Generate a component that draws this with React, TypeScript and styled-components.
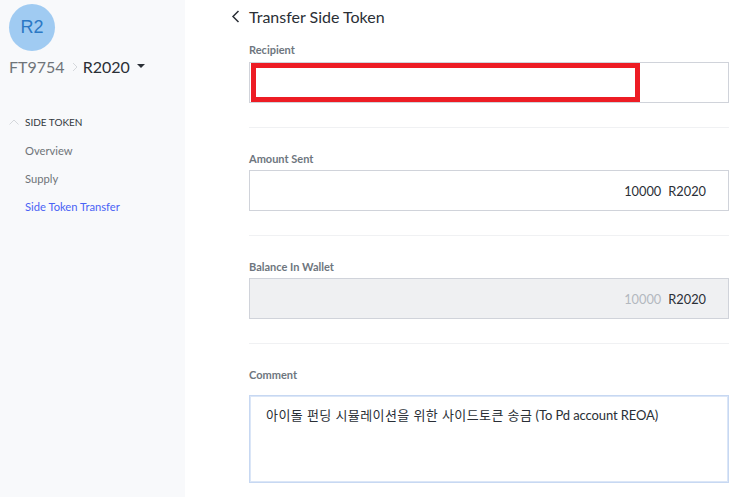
import styled, { createGlobalStyle } from "styled-components";

const GlobalStyle = createGlobalStyle`
  html, body {
    margin: 0;
    padding: 0;
    background: #fff;
    overflow: hidden;
  }
  body {
    font-family: Lato, "Noto Sans CJK KR", sans-serif;
  }
`;

const Page = styled.div`
  display: flex;
  width: 746px;
  height: 497px;
  overflow: hidden;
`;

const Sidebar = styled.aside`
  width: 185px;
  flex-shrink: 0;
  background: #f8f9fb;
  padding: 4px 0 0 9px;
  box-sizing: border-box;
`;

const Avatar = styled.div`
  width: 46px;
  height: 47px;
  border-radius: 50%;
  background: #a0cbf2;
  color: #2b78c5;
  font-family: "Liberation Sans", sans-serif;
  font-size: 18px;
  display: flex;
  align-items: center;
  justify-content: center;
`;

const Crumbs = styled.div`
  display: flex;
  align-items: center;
  margin-top: 3px;
  height: 24px;
  font-size: 16px;
  color: #6f7479;
`;

const CrumbSep = styled.svg`
  width: 6px;
  height: 10px;
  margin: 1px 5px 0 7px;
`;

const CrumbCurrent = styled.span`
  color: #2a2f36;
`;

const Caret = styled.span`
  width: 0;
  height: 0;
  margin: 0 0 0 7px;
  border-left: 4px solid transparent;
  border-right: 4px solid transparent;
  border-top: 4px solid #2a2f36;
`;

const NavHead = styled.div`
  display: flex;
  align-items: center;
  margin-top: 34px;
  height: 20px;
  font-size: 10px;
  color: #33383e;
`;

const NavChevron = styled.svg`
  width: 10px;
  height: 6px;
  margin-right: 6px;
`;

const NavList = styled.nav`
  display: flex;
  flex-direction: column;
  margin-top: 5px;
  padding-left: 16px;
`;

const NavItem = styled.a<{ $active?: boolean }>`
  height: 28px;
  line-height: 28px;
  font-size: 11.2px;
  color: ${(p) => (p.$active ? "#4a63f5" : "#6f7479")};
`;

const Main = styled.main`
  flex: 1;
  padding: 0 17px 0 64px;
`;

const TitleRow = styled.div`
  display: flex;
  align-items: center;
  height: 33px;
  margin-bottom: 8px;
  margin-left: -18px;
`;

const BackIcon = styled.svg`
  width: 9px;
  height: 13px;
  margin-right: 9px;
`;

const Title = styled.h1`
  margin: 0;
  font-size: 16px;
  font-weight: 400;
  color: #2a2f36;
`;

const Section = styled.section<{ $last?: boolean }>`
  padding: ${(p) => (p.$last ? "0" : "0 0 24px")};
  margin-bottom: ${(p) => (p.$last ? "0" : "22px")};
  border-bottom: ${(p) => (p.$last ? "none" : "1px solid #f0f1f3")};
`;

const Label = styled.div<{ $gap?: number }>`
  height: 16px;
  line-height: 18px;
  margin-bottom: ${(p) => p.$gap ?? 4}px;
  font-size: 11px;
  font-weight: 700;
  color: #6e767e;
`;

const Field = styled.div<{ $disabled?: boolean }>`
  position: relative;
  display: flex;
  align-items: center;
  justify-content: flex-end;
  gap: 7px;
  height: 41px;
  box-sizing: border-box;
  padding-right: 22px;
  border: 1px solid #d0d3da;
  background: ${(p) => (p.$disabled ? "#eff0f2" : "#fff")};
  font-size: 12.8px;
  color: #2a2f36;
`;

const Amount = styled.span<{ $muted?: boolean }>`
  color: ${(p) => (p.$muted ? "#b3b8bf" : "#2a2f36")};
`;

const Redaction = styled.div`
  position: absolute;
  left: 1px;
  top: 0;
  width: 389px;
  height: 39px;
  box-sizing: border-box;
  border: 5px solid #ed1c24;
`;

const CommentBox = styled.div`
  height: 88px;
  box-sizing: border-box;
  padding: 10px 16px;
  border: 1px solid #c7d8f2;
  box-shadow: inset 0 0 0 1px #dbe6f7;
  font-size: 13px;
  line-height: 18px;
  letter-spacing: -0.1px;
  color: #2a2f36;
`;

const Hangul = styled.span`
  letter-spacing: 0.42px;
`;

export default function App() {
  return (
    <Page>
      <GlobalStyle />
      <Sidebar>
        <Avatar>R2</Avatar>
        <Crumbs>
          FT9754
          <CrumbSep viewBox="0 0 6 10">
            <path d="M1 1l4 4-4 4" fill="none" stroke="#d5d8dc" strokeWidth="1" />
          </CrumbSep>
          <CrumbCurrent>R2020</CrumbCurrent>
          <Caret />
        </Crumbs>
        <NavHead>
          <NavChevron viewBox="0 0 10 6">
            <path d="M0.5 5.5L5 1l4.5 4.5" fill="none" stroke="#d5d8dc" strokeWidth="1" />
          </NavChevron>
          SIDE TOKEN
        </NavHead>
        <NavList>
          <NavItem>Overview</NavItem>
          <NavItem>Supply</NavItem>
          <NavItem $active>Side Token Transfer</NavItem>
        </NavList>
      </Sidebar>
      <Main>
        <TitleRow>
          <BackIcon viewBox="0 0 9 13">
            <path d="M7.5 1L2 6.5 7.5 12" fill="none" stroke="#2a2f36" strokeWidth="1.5" />
          </BackIcon>
          <Title>Transfer Side Token</Title>
        </TitleRow>
        <Section>
          <Label $gap={5}>Recipient</Label>
          <Field>
            <Redaction />
          </Field>
        </Section>
        <Section>
          <Label>Amount Sent</Label>
          <Field>
            <Amount>10000</Amount>
            <span>R2020</span>
          </Field>
        </Section>
        <Section>
          <Label>Balance In Wallet</Label>
          <Field $disabled>
            <Amount $muted>10000</Amount>
            <span>R2020</span>
          </Field>
        </Section>
        <Section $last>
          <Label $gap={13}>Comment</Label>
          <CommentBox>
            <Hangul>아이돌 펀딩 시뮬레이션을 위한 사이드토큰 송금</Hangul> (To Pd account REOA)
          </CommentBox>
        </Section>
      </Main>
    </Page>
  );
}
